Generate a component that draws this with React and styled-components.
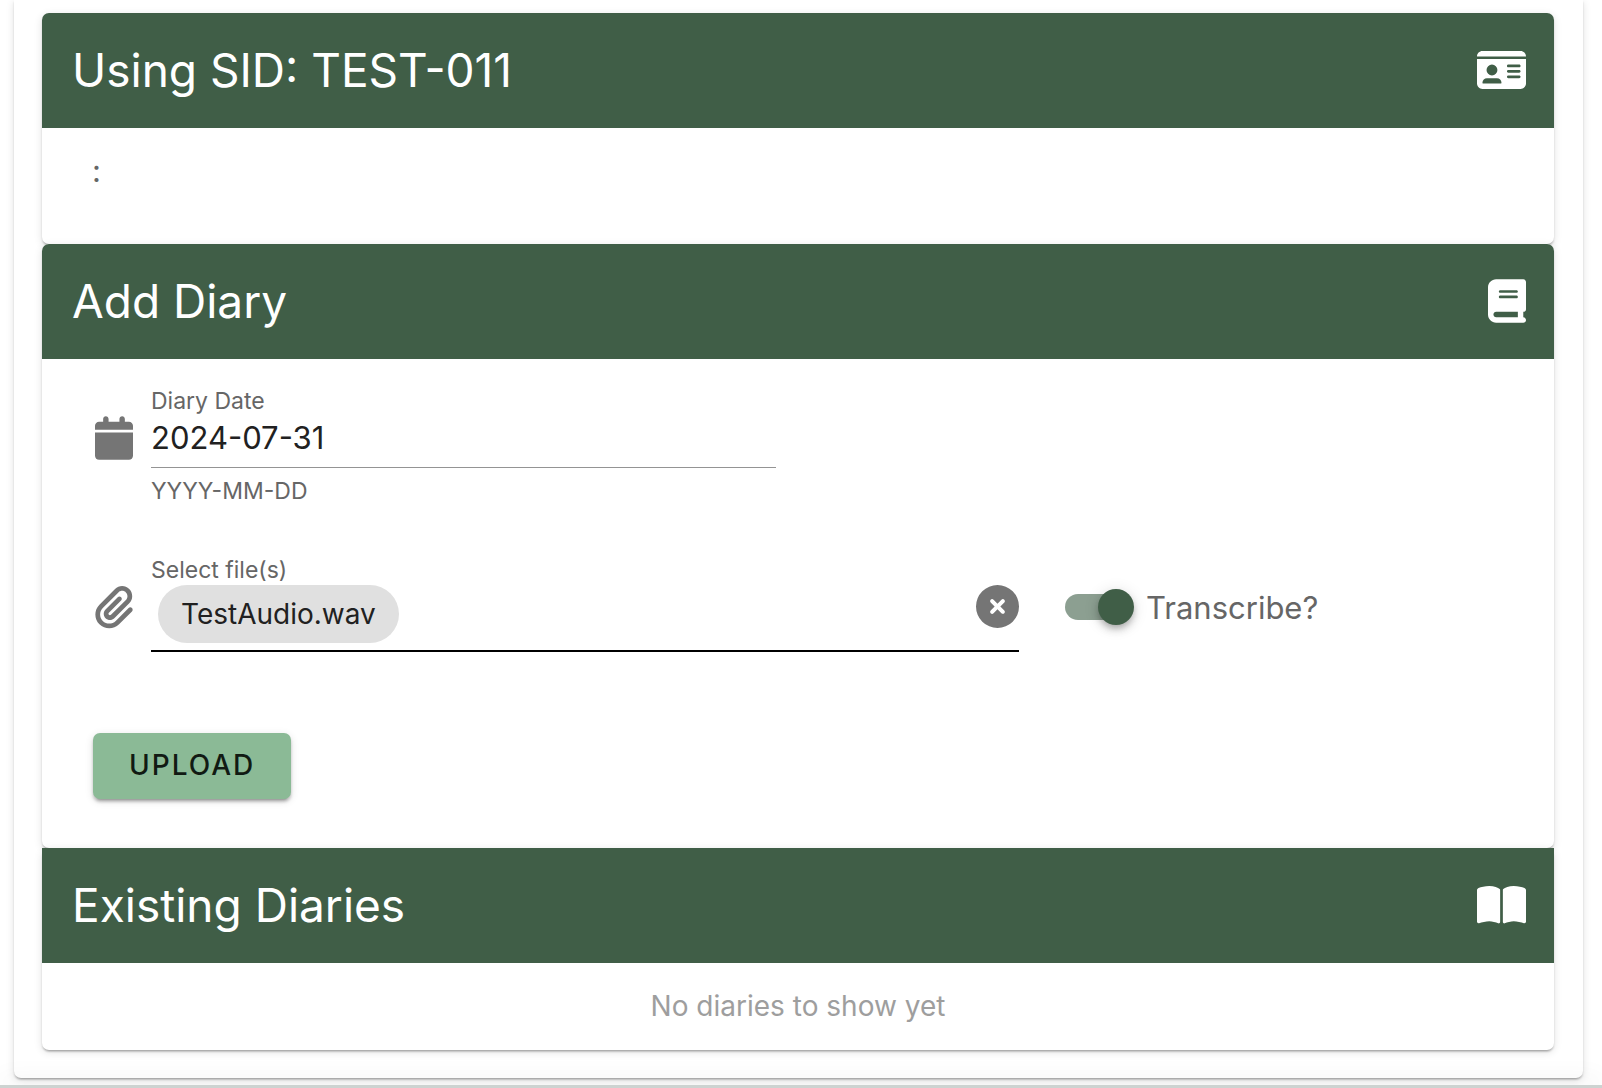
import React, { useState } from "react";
import styled, { createGlobalStyle } from "styled-components";
import {
  FaIdCard,
  FaBook,
  FaBookOpen,
  FaCalendar,
  FaPaperclip,
  FaCircleXmark,
} from "react-icons/fa6";

const colors = {
  primary: "#405e47",
  primaryTrack: "#8c9f91",
  accent: "#8bba96",
  muted: "#666666",
  icon: "#757575",
  text: "#212121",
};

const GlobalStyle = createGlobalStyle`
  *, *::before, *::after { box-sizing: border-box; }
  body {
    margin: 0;
    background: #fff;
    color: ${colors.text};
    font-family: Inter, "Open Sans", sans-serif;
    overflow-x: hidden;
  }
`;

const elevation = `
  0 3px 2px -2px rgba(0, 0, 0, 0.2),
  0 2px 2px 0 rgba(0, 0, 0, 0.14),
  0 2px 8px 0 rgba(0, 0, 0, 0.12)`;

const Page = styled.div`
  overflow: hidden;
`;

const Sheet = styled.main`
  margin: 0 19px 7px 14px;
  padding: 13px 29px 28px 28px;
  background: #fff;
  border-radius: 0 0 7px 7px;
  box-shadow: ${elevation};
`;

const Card = styled.section`
  border-radius: 7px;
  background: #fff;
  box-shadow: ${elevation};
`;

const CardHeader = styled.header`
  display: flex;
  align-items: center;
  justify-content: space-between;
  height: 115px;
  padding: 0 28px 2px 30px;
  background: ${colors.primary};
  color: #fff;
  border-radius: ${(p) => (p.$square ? "0" : "7px 7px 0 0")};
`;

const Glyph = styled.span`
  display: flex;

  svg {
    width: ${(p) => p.$width};
    height: 44px;
  }
`;

const Title = styled.h2`
  margin: 0;
  font-size: 46px;
  font-weight: 400;
  line-height: 60px;
`;

const Subject = styled.p`
  margin: 0;
  padding: 23px 50px 53px;
  color: ${colors.muted};
  font-size: 31px;
  line-height: 40px;
`;

const Form = styled.form`
  padding: 28px 27px 49px;
`;

const Row = styled.div`
  display: flex;
`;

const Column = styled.div`
  display: flex;
  flex: 0 0 ${(p) => p.$span};
  padding: 0 22px 0 24px;
  gap: 16px;
`;

const FieldIcon = styled.span`
  display: flex;
  align-items: center;
  justify-content: center;
  flex: 0 0 42px;
  height: 44px;
  margin-top: 29px;
  color: ${colors.icon};

  svg {
    width: 38px;
    height: 44px;
  }
`;

const Field = styled.div`
  flex: 1;
  min-width: 0;
`;

const Label = styled.label`
  display: block;
  color: ${colors.muted};
  font-size: 23px;
  line-height: 29px;
`;

const DateInput = styled.input`
  display: block;
  width: 100%;
  height: 52px;
  padding: 0 0 8px;
  border: 0;
  border-bottom: 1px solid #949494;
  outline: 0;
  background: transparent;
  color: ${colors.text};
  font: inherit;
  font-size: 31px;
`;

const Hint = styled.p`
  margin: 0 0 51px;
  padding-top: 9px;
  color: ${colors.muted};
  font-size: 23px;
  line-height: 28px;
`;

const FileBox = styled.div`
  display: flex;
  align-items: flex-start;
  justify-content: space-between;
  height: 67px;
  padding-left: 7px;
  border-bottom: 2px solid #000;
`;

const FileInput = styled.input`
  position: absolute;
  width: 1px;
  height: 1px;
  opacity: 0;
`;

const Chip = styled.span`
  height: 58px;
  padding: 0 23px;
  border-radius: 29px;
  background: #e0e0e0;
  font-size: 28px;
  line-height: 58px;
`;

const ClearButton = styled.button`
  display: flex;
  padding: 0;
  border: 0;
  background: none;
  color: ${colors.icon};
  cursor: pointer;

  svg {
    width: 43px;
    height: 43px;
  }
`;

const SwitchLabel = styled.label`
  display: flex;
  align-items: center;
  gap: 12px;
  height: 44px;
  margin-top: 29px;
  color: ${colors.muted};
  font-size: 31px;
  cursor: pointer;
`;

const Switch = styled.input`
  appearance: none;
  display: flex;
  align-items: center;
  width: 69px;
  height: 26px;
  margin: 0;
  border-radius: 13px;
  background: linear-gradient(to right, ${(p) => (p.checked ? colors.primaryTrack : "#9e9e9e")} 0 58px, transparent 58px);
  cursor: pointer;

  &::before {
    content: "";
    width: 36px;
    height: 36px;
    margin-left: ${(p) => (p.checked ? "33px" : "0")};
    border-radius: 50%;
    background: ${(p) => (p.checked ? colors.primary : "#fff")};
    box-shadow:
      0 4px 6px -2px rgba(0, 0, 0, 0.2),
      0 5px 8px 0 rgba(0, 0, 0, 0.14),
      0 2px 16px 0 rgba(0, 0, 0, 0.12);
  }
`;

const UploadButton = styled.button`
  display: block;
  height: 66px;
  margin: 81px 0 0 24px;
  padding: 0 36px 2px;
  border: 0;
  border-radius: 7px;
  background: ${colors.accent};
  box-shadow:
    0 5px 2px -4px rgba(0, 0, 0, 0.2),
    0 3px 3px 0 rgba(0, 0, 0, 0.2),
    0 2px 8px 0 rgba(0, 0, 0, 0.12);
  color: #111a13;
  font: inherit;
  font-size: 28px;
  font-weight: 500;
  letter-spacing: 2px;
  text-transform: uppercase;
  cursor: pointer;
`;

const Empty = styled.p`
  margin: 0;
  padding: 23px 0 24px;
  color: #9e9e9e;
  font-size: 28px;
  line-height: 40px;
  text-align: center;
`;

const Footer = styled.footer`
  position: relative;
  height: 3px;
  background: #cdd3d1;
  box-shadow: 0 -3px 24px rgba(0, 0, 0, 0.2);
`;

export default function App() {
  const [date, setDate] = useState("2024-07-31");
  const [file, setFile] = useState("TestAudio.wav");
  const [transcribe, setTranscribe] = useState(true);

  return (
    <Page>
      <GlobalStyle />
      <Sheet>
        <Card>
          <CardHeader>
            <Title>Using SID: TEST-011</Title>
            <Glyph $width="49px">
              <FaIdCard />
            </Glyph>
          </CardHeader>
          <Subject>:</Subject>
        </Card>

        <Card>
          <CardHeader>
            <Title>Add Diary</Title>
            <Glyph $width="38px">
              <FaBook />
            </Glyph>
          </CardHeader>
          <Form onSubmit={(e) => e.preventDefault()}>
            <Row>
              <Column $span="50%">
                <FieldIcon>
                  <FaCalendar />
                </FieldIcon>
                <Field>
                  <Label htmlFor="diary-date">Diary Date</Label>
                  <DateInput
                    id="diary-date"
                    value={date}
                    onChange={(e) => setDate(e.target.value)}
                  />
                  <Hint>YYYY-MM-DD</Hint>
                </Field>
              </Column>
            </Row>
            <Row>
              <Column $span="66.6667%">
                <FieldIcon>
                  <FaPaperclip />
                </FieldIcon>
                <Field>
                  <Label htmlFor="diary-file">Select file(s)</Label>
                  <FileInput
                    id="diary-file"
                    type="file"
                    onChange={(e) => setFile(e.target.files[0]?.name || "")}
                  />
                  <FileBox>
                    {file ? <Chip>{file}</Chip> : <span />}
                    <ClearButton
                      type="button"
                      aria-label="Clear"
                      onClick={() => setFile("")}
                    >
                      <FaCircleXmark />
                    </ClearButton>
                  </FileBox>
                </Field>
              </Column>
              <Column $span="33.3333%">
                <SwitchLabel>
                  <Switch
                    type="checkbox"
                    role="switch"
                    checked={transcribe}
                    onChange={(e) => setTranscribe(e.target.checked)}
                  />
                  Transcribe?
                </SwitchLabel>
              </Column>
            </Row>
            <UploadButton type="submit">Upload</UploadButton>
          </Form>
        </Card>

        <Card>
          <CardHeader $square>
            <Title>Existing Diaries</Title>
            <Glyph $width="49px">
              <FaBookOpen />
            </Glyph>
          </CardHeader>
          <Empty>No diaries to show yet</Empty>
        </Card>
      </Sheet>
      <Footer />
    </Page>
  );
}
